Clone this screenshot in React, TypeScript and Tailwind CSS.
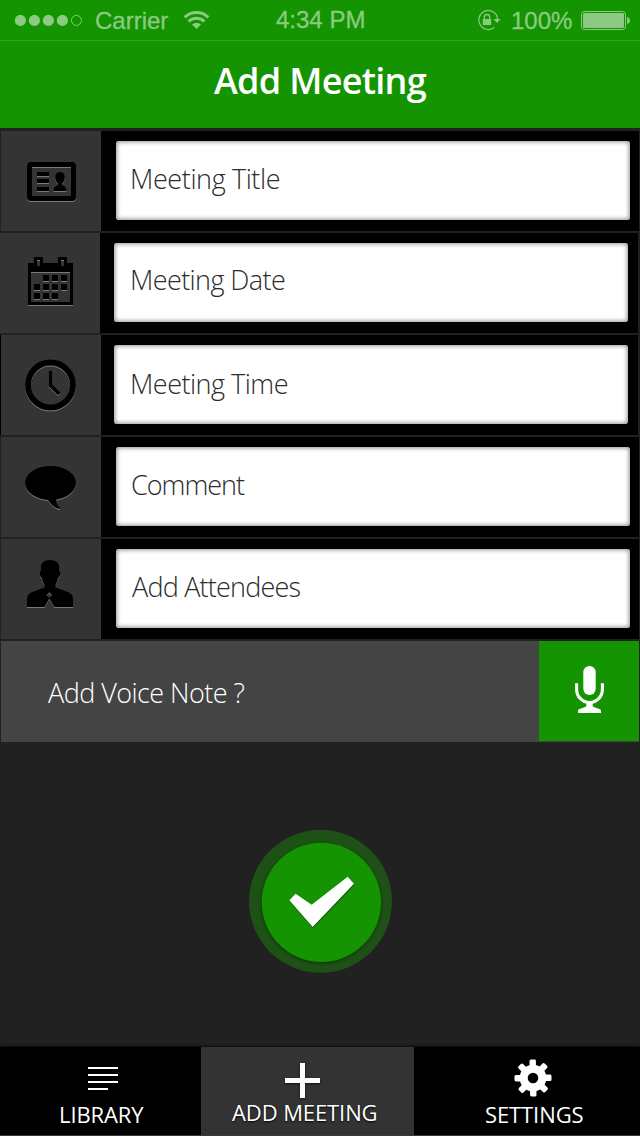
import React from "react";

const sans = "font-['Open_Sans','Noto_Sans',sans-serif]";
const emboss = "[filter:drop-shadow(0_1px_0_#7a7a7a)]";

function CardIcon() {
  return (
    <svg viewBox="0 0 100 100" className={`size-[100px] ${emboss}`}>
      <path
        fillRule="evenodd"
        d="M30 31H71Q75 31 75 35V66Q75 70 71 70H30Q26 70 26 66V35Q26 31 30 31ZM31 36V65H70V36Z"
      />
      <path d="M36 41h12v4H36zM36 48h12v4H36zM36 56h12v4H36zM59 41c-3 0-4.800 2-4.800 5 0 3 1 5 2.600 6.500v1.700c-2.500 1-4.300 1.500-4.300 5.800h13c0-4.300-1.800-4.800-4.300-5.800v-1.700c1.600-1.500 2.600-3.500 2.600-6.500 0-3-1.800-5-4.800-5z" />
    </svg>
  );
}

function CalendarIcon() {
  return (
    <svg viewBox="0 0 100 100" className={`size-[100px] ${emboss}`}>
      <path
        fillRule="evenodd"
        d="M28 30H34V24H43V30H58V24H67V30H73V72H28ZM31 39V69H70V39ZM37 27V33H40V27ZM61 27V33H64V27Z"
      />
      <path d="M43 42h6v6h-6zM52 42h6v6h-6zM61 42h6v6h-6zM34 51h6v6h-6zM43 51h6v6h-6zM52 51h6v6h-6zM61 51h6v6h-6zM34 60h6v6h-6zM43 60h6v6h-6zM52 60h6v6h-6z" />
    </svg>
  );
}

function ClockIcon() {
  return (
    <svg viewBox="0 0 100 100" className={`size-[100px] ${emboss}`} fill="none" stroke="#000">
      <circle cx="49.500" cy="50" r="22.500" strokeWidth="5.800" />
      <path d="M49.500 36V50.500L58.300 59" strokeWidth="3.600" />
    </svg>
  );
}

function CommentIcon() {
  return (
    <svg viewBox="0 0 100 100" className={`size-[100px] ${emboss}`}>
      <ellipse cx="49.500" cy="46" rx="25.500" ry="17" />
      <path d="M46.500 62.500C50 66 52 71.500 60 72C57 69.500 55 66.500 55 62Z" />
    </svg>
  );
}

function PersonIcon() {
  return (
    <svg viewBox="0 0 100 100" className={`size-[100px] ${emboss}`}>
      <path
        fillRule="evenodd"
        d="M49 21C55 21 58.300 24 58.300 28.500V32C59.500 32.500 59.500 34 59 36C58.700 37.500 58 38.500 57 39C56.500 42 55.500 44 54.700 45.500V48.500L66 52.700C70 54.200 72 56 72 60V68H53.300L48.300 59.500L43.500 68H26V60C26 56 28 54.200 32 52.700L43.300 48.500V45.500C42.500 44 41.500 42 41 39C40 38.500 39.300 37.500 39 36C38.500 34 38.500 32.500 39.700 32V28.500C39.700 24 43 21 49 21ZM48.300 53.300L45.500 56.200L48.300 59L51.100 56.200Z"
      />
    </svg>
  );
}

function MicIcon() {
  return (
    <svg viewBox="0 0 100 100" className="size-[100px]" fill="#fff">
      <rect x="44.300" y="25" width="12.400" height="29" rx="6.200" />
      <path
        d="M37.600 42.300V48.500A12.900 13 0 0 0 63.400 48.500V42.300"
        fill="none"
        stroke="#fff"
        strokeWidth="3.100"
      />
      <path d="M47.300 62H53.700V65.200C55 67 62 67.300 62 69.500V72H39V69.500C39 67.300 46 67 47.300 65.200Z" />
    </svg>
  );
}

type FieldProps = {
  icon: React.ReactNode;
  label: string;
  row: string;
  box: string;
  text: string;
};

function Field({ icon, label, row, box, text }: FieldProps) {
  return (
    <div className={`flex h-[100px] bg-black ${row}`}>
      <div className="h-[100px] w-[100px] shrink-0 bg-[#343434]">{icon}</div>
      <div
        className={`mt-[10px] h-[79px] w-[514px] rounded-[3px] bg-white shadow-[inset_0_0_4px_1px_#909090] ${box}`}
      >
        <div className={`whitespace-nowrap text-[27px] leading-[40px] font-light text-[#2c2c2c] ${text}`}>{label}</div>
      </div>
    </div>
  );
}

function StatusBar() {
  return (
    <div className="flex h-[41px] border-b border-[#36a328] font-['Liberation_Sans',sans-serif] text-[24px] leading-[40px] text-[#8bcb81]">
      <svg viewBox="0 0 95 40" className="h-10 w-[95px] shrink-0" fill="#8bcb81">
        <circle cx="20.400" cy="20.400" r="5.600" />
        <circle cx="34.400" cy="20.400" r="5.600" />
        <circle cx="48.400" cy="20.400" r="5.600" />
        <circle cx="62.400" cy="20.400" r="5.600" />
        <circle cx="76.400" cy="20.400" r="5" fill="none" stroke="#8bcb81" />
      </svg>
      <div className="w-[88px] shrink-0 whitespace-nowrap pt-[1px] [-webkit-text-stroke:0.3px_#8bcb81]">Carrier</div>
      <svg viewBox="0 0 27 40" className="h-10 w-[27px] shrink-0" fill="none" stroke="#8bcb81" strokeWidth="3">
        <path d="M1.700 17.300A17 17 0 0 1 25.300 17.300" />
        <path d="M5.600 21.500A11.200 11.200 0 0 1 21.400 21.500" />
        <path d="M13.500 29L9 24.600A6.400 6.400 0 0 1 18 24.600Z" fill="#8bcb81" stroke="none" />
      </svg>
      <div className="ml-[66px] w-[201px] shrink-0 whitespace-nowrap [-webkit-text-stroke:0.3px_#8bcb81]">4:34 PM</div>
      <svg viewBox="0 0 26 40" className="-ml-px h-10 w-[26px] shrink-0" fill="none" stroke="#8bcb81">
        <path d="M20.300 14.600A9.600 9.600 0 1 0 18.200 27.600" strokeWidth="1.200" />
        <path d="M20.300 14.600Q21.300 16.500 21.500 19" strokeWidth="1.200" />
        <path d="M17.500 19H24.500L21 23Z" fill="#8bcb81" stroke="none" />
        <rect x="6.800" y="19" width="8.400" height="6" fill="#8bcb81" stroke="none" />
        <path d="M8.300 19.500V17.200A2.700 2.700 0 0 1 13.700 17.200V19.500" strokeWidth="1.300" />
      </svg>
      <div className="ml-[9px] w-[70px] shrink-0 whitespace-nowrap pt-[1px] [-webkit-text-stroke:0.3px_#8bcb81]">100%</div>
      <svg viewBox="0 0 51 40" className="h-10 w-[51px] shrink-0" fill="#8bcb81">
        <rect x=".5" y="11.500" width="44" height="18" rx="3" fill="none" stroke="#8bcb81" />
        <rect x="2" y="13" width="41" height="15" rx="1.500" />
        <path d="M46 17Q49 18 49 20.500Q49 23 46 24Z" />
      </svg>
    </div>
  );
}

function GearIcon() {
  return (
    <svg viewBox="-19 -19 38 38" className="size-[38px]" fill="#fff">
      <circle r="9.300" fill="none" stroke="#fff" strokeWidth="8" />
      {[0, 45, 90, 135, 180, 225, 270, 315].map((a) => (
        <rect key={a} x="-3.200" y="-18.500" width="6.400" height="9" rx="1.500" transform={`rotate(${a - 1})`} />
      ))}
    </svg>
  );
}

export default function App() {
  return (
    <div className={`flex h-[1136px] w-[640px] flex-col overflow-hidden bg-[#212121] ${sans}`}>
      <header className="h-[128px] shrink-0 bg-[#139400]">
        <StatusBar />
        <h1 className="pl-[214px] pt-[16px] whitespace-nowrap text-[36px] leading-[48px] font-semibold tracking-[-0.7px] text-white">
          Add Meeting
        </h1>
      </header>

      <main className="flex flex-col gap-[2px] pt-[3px]">
        <Field icon={<CardIcon />} label="Meeting Title" row="mx-px" box="ml-[15px]" text="pl-[14px] pt-[18px] tracking-[-0.4px]" />
        <Field icon={<CalendarIcon />} label="Meeting Date" row="mr-[2px]" box="ml-[14px]" text="pl-[16px] pt-[17px] tracking-[-0.6px]" />
        <Field icon={<ClockIcon />} label="Meeting Time" row="border-l border-black mr-[2px]" box="ml-[13px]" text="pl-[16px] pt-[19px] tracking-[-0.5px]" />
        <Field icon={<CommentIcon />} label="Comment" row="mx-px" box="ml-[15px]" text="pl-[15px] pt-[18px] tracking-[-1px]" />
        <Field icon={<PersonIcon />} label="Add Attendees" row="mx-px" box="ml-[15px]" text="pl-[16px] pt-[18px] tracking-[-0.8px]" />
        <div className="mx-px flex h-[101px] bg-[#444]">
          <div className="w-[538px] whitespace-nowrap pl-[47px] pt-[32px] text-[27px] leading-[40px] font-light tracking-[-0.55px] text-white">
            Add Voice Note ?
          </div>
          <div className="h-[100px] w-[100px] bg-[#139400]">
            <MicIcon />
          </div>
        </div>
      </main>

      <section className="flex-1 pl-[235px] pt-[73px]">
        <svg viewBox="0 0 510 510" className="size-[170px]">
          <circle cx="256.500" cy="259" r="214.500" fill="#1d5115" />
          <circle cx="259" cy="262" r="179" fill="#139400" className="[filter:drop-shadow(0_3px_5px_#0b3305)]" />
          <path
            d="M163 256L182 236L230 269L338 185L357 206L233 336Z"
            fill="#fff"
            className="[filter:drop-shadow(1px_3px_1px_#084800)]"
          />
        </svg>
      </section>

      <nav className="flex h-[89px] shrink-0 border-b border-[#3a3a3a] bg-black text-[22px] leading-[30px] text-white shadow-[0_-1px_2px_#0a0a0a]">
        <div className="w-[201px]">
          <svg viewBox="0 0 30 23" className="ml-[88px] mt-[20px] h-[23px] w-[30px]" fill="#fff">
            <path d="M0 0h30v2H0zM0 7h30v2H0zM0 14h30v2H0zM0 21h20v2H0z" />
          </svg>
          <div className="mt-[9px] pl-[59px] whitespace-nowrap tracking-[-0.1px]">LIBRARY</div>
        </div>
        <div className="w-[213px] bg-[#333]">
          <svg
            viewBox="0 0 35 35"
            className="ml-[84px] mt-[16px] h-[35px] w-[35px] overflow-visible [filter:drop-shadow(0_1px_1px_#111)]"
            fill="#fff"
          >
            <path d="M15 0h5v15h15v5H20v15h-5V20H0v-5h15z" />
          </svg>
          <div className="-mt-px pl-[31px] whitespace-nowrap tracking-[-0.1px] [text-shadow:0_1px_2px_#000]">ADD MEETING</div>
        </div>
        <div className="w-[226px]">
          <div className="ml-[100px] mt-[12px] h-[38px]">
            <GearIcon />
          </div>
          <div className="mt-[2px] pl-[71px] whitespace-nowrap tracking-[-0.1px]">SETTINGS</div>
        </div>
      </nav>
    </div>
  );
}
